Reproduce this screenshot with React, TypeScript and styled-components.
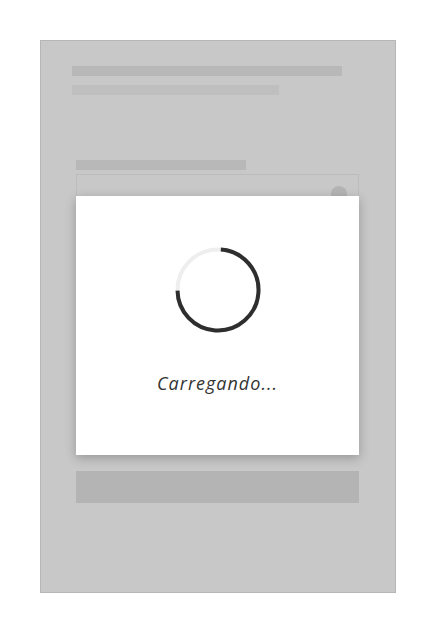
import React from "react";
import styled, { createGlobalStyle } from "styled-components";

const Global = createGlobalStyle`
  html, body { margin: 0; padding: 0; background: #ffffff; }
  body { font-family: "Open Sans", "Liberation Sans", sans-serif; }
`;

const Frame = styled.div`
  position: relative;
  box-sizing: border-box;
  margin: 40px 0 0 40px;
  width: 356px;
  height: 553px;
  background: #c8c8c8;
  border: 1px solid #b6b6b6;
  display: flex;
  flex-direction: column;
`;

const Header = styled.div`
  display: flex;
  flex-direction: column;
  gap: 9px;
  padding: 25px 0 0 31px;
`;

const Bar = styled.div<{ $w: number; $c: string }>`
  width: ${(p) => p.$w}px;
  height: 10px;
  background: ${(p) => p.$c};
`;

const Form = styled.div`
  display: flex;
  flex-direction: column;
  padding: 65px 36px 0 35px;
`;

const Input = styled.div`
  box-sizing: border-box;
  margin-top: 4px;
  height: 40px;
  border: 1px solid #bcbcbc;
  display: flex;
  align-items: center;
  justify-content: flex-end;
  padding-right: 11px;
`;

const Knob = styled.div`
  width: 16px;
  height: 16px;
  border-radius: 50%;
  background: #b4b4b4;
`;

const Button = styled.div`
  margin-top: 257px;
  height: 32px;
  background: #b4b4b4;
`;

const Modal = styled.div`
  position: absolute;
  left: 35px;
  top: 155px;
  width: 283px;
  height: 259px;
  background: #ffffff;
  box-shadow: 0 3px 10px rgba(0, 0, 0, 0.25);
  display: flex;
  flex-direction: column;
  align-items: center;
  padding-top: 51px;
  box-sizing: border-box;
`;

const Spinner = styled.svg`
  width: 86px;
  height: 86px;
  display: block;
`;

const Label = styled.div`
  margin-top: 38px;
  font-family: "Open Sans", "Liberation Sans", sans-serif;
  font-style: italic;
  font-size: 18px;
  line-height: 24px;
  letter-spacing: 1px;
  color: #333333;
`;

export default function App() {
  const r = 40.5;
  const c = 2 * Math.PI * r;
  return (
    <>
      <Global />
      <Frame>
        <Header>
          <Bar $w={270} $c="#b8b8b8" />
          <Bar $w={207} $c="#bfbfbf" />
        </Header>
        <Form>
          <Bar $w={170} $c="#b8b8b8" />
          <Input>
            <Knob />
          </Input>
          <Button />
        </Form>
        <Modal>
          <Spinner viewBox="0 0 86 86">
            <circle cx="43" cy="43" r={r} fill="none" stroke="#eeeeee" strokeWidth="4" />
            <circle
              cx="43"
              cy="43"
              r={r}
              fill="none"
              stroke="#2e2e2e"
              strokeWidth="4"
              strokeDasharray={`${c * 0.735} ${c}`}
              transform="rotate(-86 43 43)"
            />
          </Spinner>
          <Label>Carregando...</Label>
        </Modal>
      </Frame>
    </>
  );
}
